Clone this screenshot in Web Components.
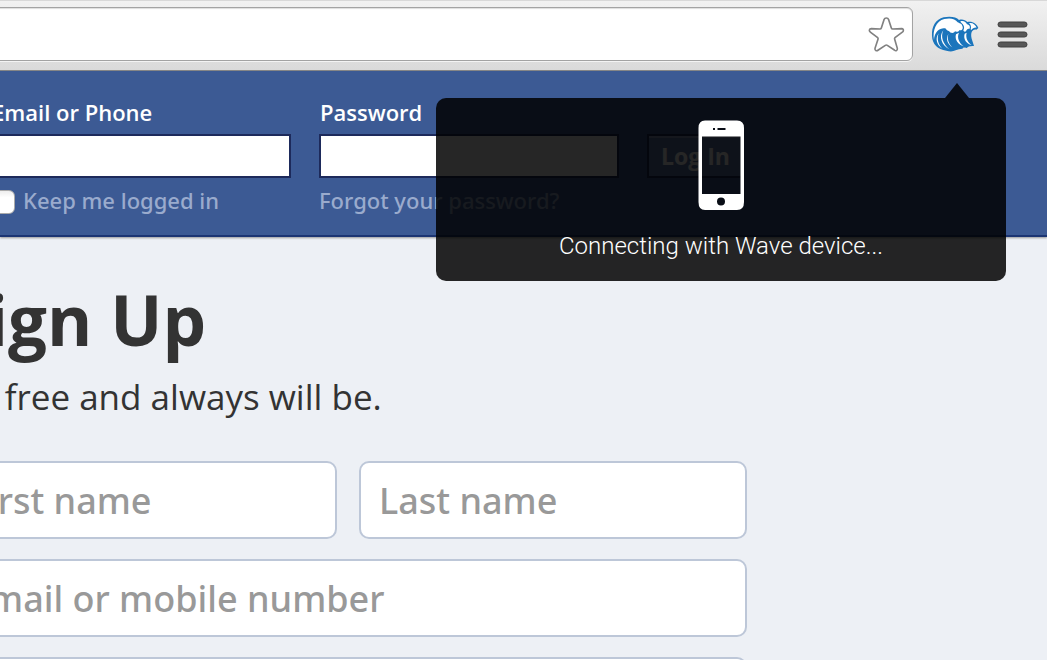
<!DOCTYPE html>
<html lang="en">
<head>
<meta charset="utf-8">
<title>Sign Up</title>
<style>
    body {
        margin: 0;
        height: 100vh;
        overflow: hidden;
        position: relative;
        background: #edf0f5;
        font-family: "Open Sans", "Noto Sans", sans-serif;
    }
</style>
</head>
<body>
    <browser-toolbar></browser-toolbar>
    <login-bar></login-bar>
    <sign-up>
        <span slot="title">Sign Up</span>
        <span slot="tagline">It's free and always will be.</span>
    </sign-up>
    <device-popup>Connecting with Wave device...</device-popup>

<script>
class BrowserToolbar extends HTMLElement {
    constructor(){
        super();
        this.shadowDOM = this.attachShadow({mode:"open"});
    }

    connectedCallback(){
        this.render();
    }

    render(){
        this.shadowDOM.innerHTML = `
        <style>
            :host {
                display: flex;
                align-items: center;
                box-sizing: border-box;
                height: 71px;
                padding: 0 19px 3px 0;
                border-top: 1px solid #d8d8d8;
                border-bottom: 1px solid #858585;
                background: linear-gradient(#f1f1f1, #dadada);
            }

            input {
                flex: 1;
                min-width: 0;
                box-sizing: border-box;
                height: 54px;
                margin-left: -10px;
                padding: 0 60px 0 20px;
                border: 1px solid #a3a3a3;
                border-radius: 6px;
                background: #fff;
                box-shadow: inset 0 1px 1px #ddd, 0 1px 0 #f4f4f4;
                font: 24px "Open Sans", sans-serif;
            }

            button {
                display: block;
                padding: 0;
                border: 0;
                background: none;
            }

            svg {
                display: block;
            }

            .star {
                margin: 0 8px 0 -45px;
            }

            .wave {
                margin: 0 18px;
            }
        </style>
        <input type="text" aria-label="Address">
        <button class="star" aria-label="Bookmark">
            <svg width="37" height="37" viewBox="0 0 111 111">
                <path d="M55 6Q60 6 62 11L70 36Q71 39 74 39L101 38Q107 39 106 44Q106 46 102 49L81 65Q79 67 80 70L88 97Q89 103 85 104Q82 105 79 102L58 88Q55 86 52 88L31 102Q27 105 24 104Q20 103 21 97L30 70Q31 67 29 65L8 49Q4 46 4 43Q4 39 10 38L36 39Q39 39 40 36L48 11Q50 6 55 6Z" fill="#fff" stroke="#818181" stroke-width="5"/>
            </svg>
        </button>
        <button class="wave" aria-label="Wave">
            <svg width="48" height="36" viewBox="0 0 144 108">
                <path d="M46 104C20 101 4 84 3 60C1 32 14 10 38 4C58 0 76 3 84 12C94 9 103 12 109 18C122 14 138 22 142 36L136 41C130 39 125 42 122 48C120 54 120 60 122 68L129 90C117 89 111 92 107 96C102 96 100 94 97 95L94 98C88 99 80 99 74 103C66 107 56 107 46 104Z" fill="#1b75bc"/>
                <path d="M9 72C4 44 15 15 40 9C58 5 73 8 80 19C84 22 92 22 94 30C98 38 92 45 86 42C82 49 75 48 72 46C68 54 57 51 54 45C49 45 46 41 43 37C30 34 10 44 9 72Z" fill="#fff"/>
                <path d="M88 16C98 13 105 18 108 25C116 26 119 34 115 39C110 37 107 42 105 46C101 49 98 46 97 43C102 34 98 27 94 23C92 22 90 20 88 16Z" fill="#fff"/>
                <path d="M114 21C125 19 134 26 137 35C130 34 124 38 121 42L119 40C122 32 119 26 114 21Z" fill="#fff"/>
                <path d="M23 52C17 68 22 86 34 98C16 86 12 67 23 52Z" fill="#fff"/>
                <path d="M37 43C28 62 36 84 55 100C32 88 22 62 37 43Z" fill="#fff"/>
                <path d="M52 54C47 72 56 86 64 94C51 86 43 70 52 54Z" fill="#fff"/>
                <path d="M75 55L84 50C77 65 84 80 98 91C82 86 70 72 75 55Z" fill="#fff"/>
                <path d="M101 53L107 50C103 66 110 78 122 87C106 83 96 69 101 53Z" fill="#fff"/>
            </svg>
        </button>
        <button aria-label="Menu">
            <svg width="31" height="27" viewBox="0 0 31 27">
                <g fill="#575757" stroke="#404040">
                    <rect x="1" y="1" width="29" height="5" rx="2.5"/>
                    <rect x="1" y="11" width="29" height="5" rx="2.5"/>
                    <rect x="1" y="21" width="29" height="5" rx="2.5"/>
                </g>
            </svg>
        </button>
        `;
    }
}

class LoginBar extends HTMLElement {
    constructor(){
        super();
        this.shadowDOM = this.attachShadow({mode:"open"});
    }

    connectedCallback(){
        this.render();
    }

    render(){
        this.shadowDOM.innerHTML = `
        <style>
            :host {
                display: block;
                padding: 26px 0 20px;
                border-bottom: 2px solid #1c3573;
                background: #3c5a94;
                box-shadow: 0 1px 2px #999;
                font-size: 22px;
                line-height: 30px;
            }

            form {
                display: grid;
                grid-template-columns: 300px 300px auto;
                justify-content: start;
                align-items: center;
                gap: 7px 28px;
                margin-left: -9px;
            }

            .caption {
                color: #fff;
                font-weight: 600;
                padding-left: 1px;
            }

            .field {
                grid-row: 2;
                box-sizing: border-box;
                width: 100%;
                height: 44px;
                padding: 0 8px;
                border: 2px solid #1d2a5b;
                border-radius: 0;
                background: #fff;
                font: inherit;
            }

            .keep {
                grid-row: 3;
                display: flex;
                align-items: center;
                gap: 8px;
            }

            .keep, a {
                color: #9aabcd;
                font-family: "Noto Sans", sans-serif;
                font-weight: 500;
                text-decoration: none;
            }

            a {
                grid-column: 2;
            }

            input[type="checkbox"] {
                appearance: none;
                width: 24px;
                height: 24px;
                margin: 4px 0 0;
                border: 1px solid #aaa;
                border-radius: 6px;
                background: linear-gradient(#eee, #fff 30%);
            }

            button {
                grid-row: 2;
                grid-column: 3;
                height: 44px;
                padding: 0 12px;
                border: 2px solid #1d2a5b;
                background: #627aad;
                box-shadow: inset 0 2px 0 #8a9cc2;
                color: #fff;
                font: 700 23px "Open Sans", sans-serif;
            }
        </style>
        <form>
            <label class="caption" for="email">Email or Phone</label>
            <label class="caption" for="pass">Password</label>
            <input class="field" type="text" id="email">
            <input class="field" type="password" id="pass">
            <button type="button">Log In</button>
            <label class="keep"><input type="checkbox">Keep me logged in</label>
            <a href="#">Forgot your password?</a>
        </form>
        `;
    }
}

class SignUp extends HTMLElement {
    constructor(){
        super();
        this.shadowDOM = this.attachShadow({mode:"open"});
    }

    connectedCallback(){
        this.render();
    }

    render(){
        this.shadowDOM.innerHTML = `
        <style>
            :host {
                display: block;
                max-width: 798px;
                margin-left: -51px;
                padding-top: 43px;
                color: #333;
            }

            h1 {
                margin: 0 0 16px;
                font-size: 69px;
                line-height: 78px;
                font-weight: 700;
            }

            p {
                margin: 0 0 41px;
                font-size: 35px;
                line-height: 46px;
                font-weight: 400;
            }

            form {
                display: grid;
                grid-template-columns: 1fr 1fr;
                gap: 20px 22px;
            }

            input {
                box-sizing: border-box;
                width: 100%;
                height: 78px;
                padding: 0 18px;
                border: 2px solid #bdc7d8;
                border-radius: 10px;
                background: #fff;
                font: 500 36px "Noto Sans", sans-serif;
            }

            input::placeholder {
                color: #999;
                opacity: 1;
            }

            .wide {
                grid-column: 1 / 3;
            }
        </style>
        <h1><slot name="title"></slot></h1>
        <p><slot name="tagline"></slot></p>
        <form>
            <input type="text" placeholder="First name" aria-label="First name">
            <input type="text" placeholder="Last name" aria-label="Last name">
            <input class="wide" type="text" placeholder="Email or mobile number" aria-label="Email or mobile number">
            <input class="wide" type="text" aria-label="Re-enter email or mobile number">
        </form>
        `;
    }
}

class DevicePopup extends HTMLElement {
    constructor(){
        super();
        this.shadowDOM = this.attachShadow({mode:"open"});
    }

    connectedCallback(){
        this.render();
    }

    render(){
        this.shadowDOM.innerHTML = `
        <style>
            /* floats over the page, under the toolbar icon */
            :host {
                position: absolute;
                top: 98px;
                right: 41px;
                display: flex;
                flex-direction: column;
                align-items: center;
                gap: 20px;
                box-sizing: border-box;
                width: 570px;
                padding: 22px 20px 20px;
                border-radius: 10px;
                background: rgba(0, 0, 0, .85);
                color: #fff;
                font: 300 24px/30px Roboto, sans-serif;
            }

            :host::before {
                content: "";
                position: absolute;
                right: 37px;
                bottom: 100%;
                border: 12px solid transparent;
                border-top: 0;
                border-bottom: 15px solid rgba(0, 0, 0, .85);
            }

            svg {
                display: block;
            }
        </style>
        <svg width="46" height="91" viewBox="0 0 46 91">
            <path fill="#fff" fill-rule="evenodd" d="M7 0.500H39Q46 0.500 46 8V82Q46 90 39 90H7Q0.500 90 0.500 82V8Q0.500 0.500 7 0.500ZM4 16.500V74H42.500V16.500ZM15 8V10H17V8ZM19.500 8V10H27.500V8ZM23 77.500A4 4 0 1 0 23 85.500A4 4 0 1 0 23 77.500Z"/>
        </svg>
        <div role="status"><slot></slot></div>
        `;
    }
}

customElements.define("browser-toolbar", BrowserToolbar);
customElements.define("login-bar", LoginBar);
customElements.define("sign-up", SignUp);
customElements.define("device-popup", DevicePopup);
</script>
</body>
</html>
